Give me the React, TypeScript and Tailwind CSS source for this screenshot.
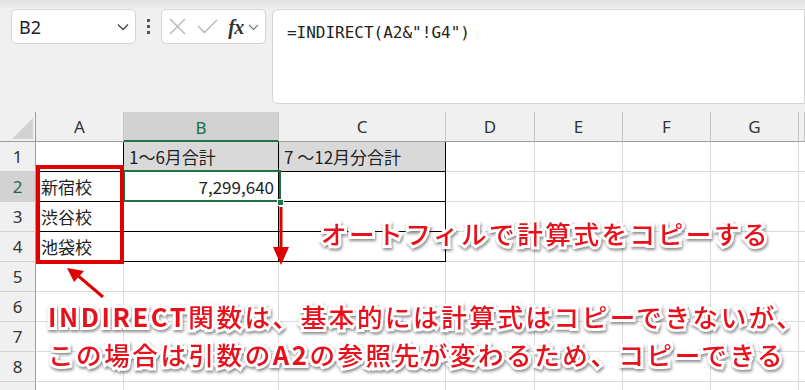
import React from "react";

const COLS = [36, 88, 155, 167, 89, 88, 88, 88, 6];
const LETTERS = ["", "A", "B", "C", "D", "E", "F", "G", ""];

const jp = "font-['Noto_Sans_CJK_JP','Noto_Sans',sans-serif]";

function cellClass(r: number, c: number): string {
  const table =
    (r >= 1 && r <= 4 && (c === 2 || c === 3)) || (r >= 2 && r <= 4 && c === 1);
  const a1 = r === 1 && c === 1;
  const rightBlack = table || a1;
  const bottomBlack = table || a1;
  let cls = "border-r border-b ";
  cls += rightBlack ? "border-r-black " : "border-r-[#dadada] ";
  cls += bottomBlack ? "border-b-black " : "border-b-[#dadada] ";
  if (r === 1 && (c === 2 || c === 3)) cls += "bg-[#d9d9d9] ";
  else cls += "bg-white ";
  return cls;
}

const cellText: Record<string, { t: string; right?: boolean }> = {
  "1-2": { t: "1～6月合計" },
  "1-3": { t: "7 ～12月分合計" },
  "2-1": { t: "新宿校" },
  "2-2": { t: "7,299,640", right: true },
  "3-1": { t: "渋谷校" },
  "4-1": { t: "池袋校" },
};

const overlayText =
  "absolute whitespace-nowrap text-[#e8101a] font-medium tracking-[2.6px] [-webkit-text-stroke:6px_#ffffff] [paint-order:stroke_fill] [filter:drop-shadow(1px_2px_1.5px_rgba(0,0,0,0.45))] " +
  jp;

export default function App() {
  const rows = [1, 2, 3, 4, 5, 6, 7, 8, 9];
  return (
    <div className="relative w-[805px] h-[390px] overflow-hidden bg-[#f0f0f0]">
      {/* top strip */}
      <div className="h-[8px] bg-gradient-to-b from-[#e2e2e2] to-[#ececec]" />
      {/* toolbar */}
      <div className="flex items-start h-[104px] pt-[1px] pl-[11px]">
        <div className="flex items-center justify-between w-[126px] h-[35px] bg-white border border-[#d4d4d4] rounded-[5px] pl-[7px] pr-[6px]">
          <span className="text-[18px] text-[#222] font-['Noto_Sans',sans-serif] leading-none">B2</span>
          <svg width="12" height="8" viewBox="0 0 12 8">
            <path d="M1 1.5 L6 6.5 L11 1.5" fill="none" stroke="#444" strokeWidth="1.3" />
          </svg>
        </div>
        <div className="w-[26px] h-[35px] flex flex-col items-center justify-center gap-[3px]">
          <div className="w-[3px] h-[3px] bg-[#555]" />
          <div className="w-[3px] h-[3px] bg-[#555]" />
          <div className="w-[3px] h-[3px] bg-[#555]" />
        </div>
        <div className="flex items-center w-[106px] h-[35px] bg-white border border-[#d4d4d4] rounded-[5px] pl-[6px]">
          <svg width="17" height="17" viewBox="0 0 17 17" className="ml-[1px]">
            <path d="M1 1 L16 16 M16 1 L1 16" stroke="#b4b4b4" strokeWidth="1.3" fill="none" />
          </svg>
          <svg width="21" height="15" viewBox="0 0 21 15" className="ml-[11px]">
            <path d="M1 7 L7.5 13.5 L20 1" stroke="#b4b4b4" strokeWidth="1.3" fill="none" />
          </svg>
          <span className="ml-[10px] text-[20px] italic font-bold text-[#333] font-['Liberation_Serif',serif] leading-none tracking-[-0.5px]">
            fx
          </span>
          <svg width="11" height="7" viewBox="0 0 11 7" className="ml-[4px] mt-[2px]">
            <path d="M1 1 L5.5 5.5 L10 1" fill="none" stroke="#777" strokeWidth="1.1" />
          </svg>
        </div>
        <div className="ml-[6px] w-[540px] h-[95px] bg-white border border-[#d4d4d4] rounded-l-[6px] pl-[14px] pt-[10px]">
          <span className="text-[16px] text-[#222] font-['DejaVu_Sans_Mono',monospace] leading-none">
            =INDIRECT(A2&amp;"!G4")
          </span>
        </div>
      </div>

      {/* grid */}
      <div className="grid grid-cols-[36px_88px_155px_167px_89px_88px_88px_88px_6px] auto-rows-[30px]">
        {COLS.map((_, c) => {
          if (c === 0) {
            return (
              <div key="corner" className="relative bg-[#f0f0f0] border-r border-b border-r-[#9e9e9e] border-b-[#9e9e9e]">
                <svg width="22" height="21" viewBox="0 0 22 21" className="absolute left-[12px] top-[6px]">
                  <path d="M21 0 L21 21 L0 21 Z" fill="#d2d2d2" />
                </svg>
              </div>
            );
          }
          const sel = c === 2;
          return (
            <div
              key={"h" + c}
              className={
                "flex items-center justify-center border-r text-[17px] leading-none font-['Noto_Sans',sans-serif] " +
                (sel
                  ? "bg-[#d2d2d2] border-r-[#c6c6c6] border-b-2 border-b-[#217346] text-[#1e6b3f] pt-[2px]"
                  : "bg-[#f0f0f0] border-r-[#c6c6c6] border-b border-b-[#9e9e9e] text-[#333]")
              }
            >
              {LETTERS[c]}
            </div>
          );
        })}
        {rows.map((r) =>
          COLS.map((_, c) => {
            if (c === 0) {
              const sel = r === 2;
              return (
                <div
                  key={r + "-0"}
                  className={
                    "flex items-center justify-center border-r border-b border-r-[#9e9e9e] border-b-[#d0d0d0] text-[17px] leading-none font-['Noto_Sans',sans-serif] " +
                    (sel ? "bg-[#d2d2d2] text-[#1e6b3f]" : "bg-[#f0f0f0] text-[#333]")
                  }
                >
                  {r < 9 ? r : null}
                </div>
              );
            }
            const txt = cellText[r + "-" + c];
            return (
              <div
                key={r + "-" + c}
                className={
                  cellClass(r, c) +
                  "flex items-center text-[17px] text-[#222] leading-none px-[5px] " +
                  jp +
                  (txt && txt.right ? " justify-end pr-[4px]" : "")
                }
              >
                {txt ? txt.t : null}
              </div>
            );
          })
        )}
      </div>

      {/* selection of B2 */}
      <div className="absolute left-[123px] top-[170px] w-[158px] h-[32px] border-2 border-[#217346]" />
      <div className="absolute left-[277px] top-[199px] w-[7px] h-[7px] bg-[#217346] border border-white" />

      {/* red box */}
      <div className="absolute left-[36px] top-[165px] w-[88px] h-[99px] border-4 border-[#e00000]" />

      {/* down arrow */}
      <svg className="absolute left-[271px] top-[205px]" width="20" height="62" viewBox="0 0 20 62">
        <path d="M10 2 L10 46" stroke="#e00000" strokeWidth="3" />
        <path d="M2 42 L10 60 L18 42 Z" fill="#e00000" />
      </svg>

      {/* diagonal arrow */}
      <svg className="absolute left-[64px] top-[264px]" width="44" height="36" viewBox="0 0 44 36">
        <path d="M39 33 L12 10" stroke="#e00000" strokeWidth="3" />
        <path d="M3 4 L20 7 L10 18 Z" fill="#e00000" />
      </svg>

      {/* overlay texts */}
      <div className={overlayText + " left-[321px] top-[218px] text-[25.5px] leading-[30px]"}>
        オートフィルで計算式をコピーする
      </div>
      <div className={overlayText + " left-[48px] top-[297px] text-[25.5px] leading-[38px]"}>
        <div>
          <span className="font-bold">INDIRECT</span>関数は、基本的には計算式はコピーできないが、
        </div>
        <div>
          この場合は引数の<span className="font-bold">A2</span>の参照先が変わるため、コピーできる
        </div>
      </div>
    </div>
  );
}
